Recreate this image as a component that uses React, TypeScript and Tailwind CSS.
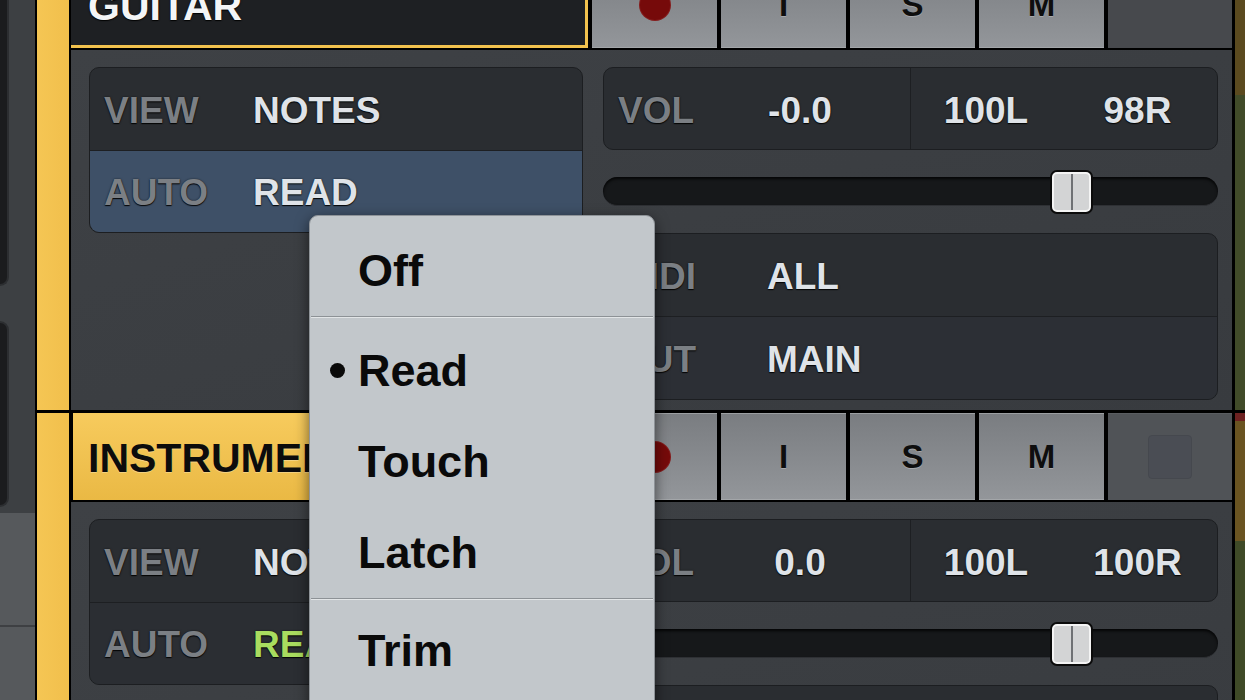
import React from "react";

const F = "font-['Liberation_Sans',Arial,Helvetica,sans-serif] font-bold";
const SH = "[text-shadow:0_1px_1px_rgba(0,0,0,0.9),0_0_2px_rgba(0,0,0,0.6)]";

function Btn({ children }: { children?: React.ReactNode }) {
  return (
    <div className="w-[125px] h-full bg-gradient-to-b from-[#7a7d81] to-[#93969a] border-t border-[#9c9fa2] border-b border-b-[#a3a6a9] flex items-center justify-center">
      {children}
    </div>
  );
}

function BtnText({ t }: { t: string }) {
  return (
    <span className={`${F} text-[33px] leading-none text-[#0e0e0e] [text-shadow:0_1px_0_rgba(255,255,255,0.25)]`}>{t}</span>
  );
}

function Header({ name, selected }: { name: string; selected: boolean }) {
  return (
    <div className="flex h-[87px] shrink-0 bg-black">
      {selected ? (
        <div className="w-[517px] bg-gradient-to-b from-[#f7cb5d] to-[#eab944] flex items-center pl-[15px] pt-[4px] border-l-2 border-black">
          <span className={`${F} text-[41px] leading-none text-[#0c0c0c] [text-shadow:0_1px_0_rgba(255,255,255,0.3)]`}>{name}</span>
        </div>
      ) : (
        <div className="w-[517px] bg-[#1e2023] border-b-[3px] border-r-[3px] border-[#f2c24e] flex items-center pl-[17px] pt-[7px]">
          <span className={`${F} text-[41px] leading-none text-[#f4f5f6] ${SH}`}>{name}</span>
        </div>
      )}
      <div className="flex gap-[4px] px-[4px] bg-black">
        <Btn>
          <div className="w-[32px] h-[32px] rounded-full bg-[#760a0a] border border-[#9a3a3a]/40" />
        </Btn>
        <Btn>
          <BtnText t="I" />
        </Btn>
        <Btn>
          <BtnText t="S" />
        </Btn>
        <Btn>
          <BtnText t="M" />
        </Btn>
      </div>
      <div
        className={`flex-1 flex items-center justify-center border-t border-[#5a5d61] ${
          selected ? "bg-[#505357]" : "bg-[#47494d]"
        }`}
      >
        {selected && <div className="w-[44px] h-[44px] rounded-[4px] bg-[#4a4d54] border border-[#45484e]" />}
      </div>
    </div>
  );
}

function Label({ t, w }: { t: string; w?: string }) {
  return <span className={`${F} text-[37px] leading-none text-[#7b7f84] ${SH} ${w ?? ""}`}>{t}</span>;
}

function Val({ t, green }: { t: string; green?: boolean }) {
  return (
    <span className={`${F} text-[37px] leading-none ${green ? "text-[#a9dc5f]" : "text-[#dfe3e8]"} ${SH}`}>{t}</span>
  );
}

function LeftPanel({ autoVal, highlight, green }: { autoVal: string; highlight: boolean; green?: boolean }) {
  return (
    <div className="w-[494px] h-[166px] shrink-0 rounded-[10px] bg-[#2a2d31] border border-[#1c1e21] overflow-hidden flex flex-col">
      <div className="flex-1 flex items-center pl-[14px] pt-[3px] border-b border-[#1d1f22]">
        <Label t="VIEW" w="w-[149px]" />
        <Val t="NOTES" />
      </div>
      <div className={`flex-1 flex items-center pl-[14px] pt-[3px] ${highlight ? "bg-[#3e5067]" : "bg-[#2b2e33]"}`}>
        <Label t="AUTO" w="w-[149px]" />
        <Val t={autoVal} green={green} />
      </div>
    </div>
  );
}

function VolPanel({ vol, l, r }: { vol: string; l: string; r: string }) {
  return (
    <div className="h-[83px] shrink-0 rounded-[10px] bg-[#2a2d31] border border-[#1c1e21] flex overflow-hidden">
      <div className="w-[307px] flex items-center pt-[3px] border-r border-[#1d1f22]">
        <div className="w-[86px] pl-[14px]">
          <Label t="VOL" />
        </div>
        <div className="flex-1 text-center">
          <Val t={vol} />
        </div>
      </div>
      <div className="flex-1 flex items-center pt-[3px]">
        <div className="w-[150px] text-center">
          <Val t={l} />
        </div>
        <div className="w-[153px] text-center">
          <Val t={r} />
        </div>
      </div>
    </div>
  );
}

function Fader() {
  return (
    <div className="h-[83px] shrink-0 relative flex items-center">
      <div className="w-full h-[29px] rounded-full bg-[#16181a] shadow-[inset_0_2px_3px_rgba(0,0,0,0.8)] border-b border-[#2e3034]" />
      <div className="absolute left-[447px] top-[20px] w-[43px] h-[44px] rounded-[7px] bg-[#0b0b0b] p-[2px]">
        <div className="w-full h-full rounded-[5px] border-[2px] border-[#f4f4f4] bg-[#d3d4d5] flex justify-center">
          <div className="w-[2px] h-full bg-[#6f7174]" />
        </div>
      </div>
    </div>
  );
}

function MidiPanel() {
  return (
    <div className="h-[167px] shrink-0 rounded-[10px] bg-[#2a2d31] border border-[#1c1e21] overflow-hidden flex flex-col">
      <div className="flex-1 flex items-center pl-[14px] pt-[3px] border-b border-[#1d1f22]">
        <Label t="MIDI" w="w-[149px]" />
        <Val t="ALL" />
      </div>
      <div className="flex-1 flex items-center pl-[14px] pt-[3px] bg-[#2c2f35]">
        <Label t="OUT" w="w-[149px]" />
        <Val t="MAIN" />
      </div>
    </div>
  );
}

function Track({
  name,
  selected,
  first,
}: {
  name: string;
  selected: boolean;
  first?: boolean;
}) {
  return (
    <div className={`flex shrink-0 ${first ? "mt-[-39px] h-[449px]" : "h-[449px]"}`}>
      <div className="w-[2px] bg-black" />
      <div className="w-[32px] bg-gradient-to-r from-[#f5c654] to-[#f1bf4c]" />
      <div className="w-[2px] bg-black" />
      <div className="w-[1161px] flex flex-col">
        <Header name={name} selected={selected} />
        <div className="h-[2px] bg-black shrink-0" />
        <div className="h-[360px] bg-gradient-to-br from-[#3e4145] to-[#383b3f] flex pt-[17px] pl-[18px] pr-[14px] gap-[20px]">
          <LeftPanel autoVal="READ" highlight={!selected} green={selected} />
          <div className="flex-1 flex flex-col">
            <VolPanel vol={selected ? "0.0" : "-0.0"} l="100L" r={selected ? "100R" : "98R"} />
            <Fader />
            <MidiPanel />
          </div>
        </div>
      </div>
      <div className="w-[3px] bg-black" />
      {first ? (
        <div className="w-[10px] flex flex-col">
          <div className="h-[134px] bg-[#5b4a1f]" />
          <div className="flex-1 bg-[#414b29]" />
        </div>
      ) : (
        <div className="w-[10px] flex flex-col">
          <div className="h-[8px] bg-[#6d2121]" />
          <div className="h-[120px] bg-[#6a5421]" />
          <div className="flex-1 bg-[#3f4a27]" />
        </div>
      )}
    </div>
  );
}

function MenuItem({ t, bullet }: { t: string; bullet?: boolean }) {
  return (
    <div className="relative h-[91px] flex items-center pl-[48px]">
      {bullet && <div className="absolute left-[20px] top-[38px] w-[15px] h-[15px] rounded-full bg-[#0a0a0a]" />}
      <span className={`${F} text-[45px] leading-none text-[#0a0a0a]`}>{t}</span>
    </div>
  );
}

function Sep() {
  return (
    <div className="mx-[1px]">
      <div className="h-px bg-[#8d9296]" />
      <div className="h-px bg-[#e2e5e7]" />
    </div>
  );
}

function Menu() {
  return (
    <div className="absolute left-[309px] top-[215px] w-[346px] h-[500px] rounded-t-[9px] bg-[#c2c7cb] border border-[#8e9398] shadow-[0_4px_14px_rgba(0,0,0,0.55)] flex flex-col pt-[9px]">
      <MenuItem t="Off" />
      <Sep />
      <div className="h-[7px]" />
      <MenuItem t="Read" bullet />
      <MenuItem t="Touch" />
      <MenuItem t="Latch" />
      <Sep />
      <div className="h-[5px]" />
      <MenuItem t="Trim" />
    </div>
  );
}

function LeftColumn() {
  return (
    <div className="w-[35px] shrink-0 h-full flex flex-col bg-[#3d4043]">
      <div className="h-[513px] flex flex-col relative">
        <div className="h-[286px] w-[9px] rounded-br-[9px] bg-[#1b1c1e] border-r-2 border-b-2 border-[#2c2e31]" />
        <div className="h-[35px]" />
        <div className="h-[186px] w-[9px] rounded-r-[9px] bg-[#1b1c1e] border-r-2 border-y-2 border-[#2c2e31]" />
      </div>
      <div className="flex-1 flex flex-col bg-[#56595c]">
        <div className="h-[114px] border-b-2 border-[#3e4043]" />
        <div className="flex-1" />
      </div>
    </div>
  );
}

export default function App() {
  return (
    <div className="relative w-[1245px] h-[700px] overflow-hidden bg-[#3c3f43] flex">
      <LeftColumn />
      <div className="w-[1210px] flex flex-col">
        <Track name="GUITAR" selected={false} first />
        <div className="h-[3px] bg-black shrink-0" />
        <Track name="INSTRUMENT" selected />
      </div>
      <Menu />
    </div>
  );
}
